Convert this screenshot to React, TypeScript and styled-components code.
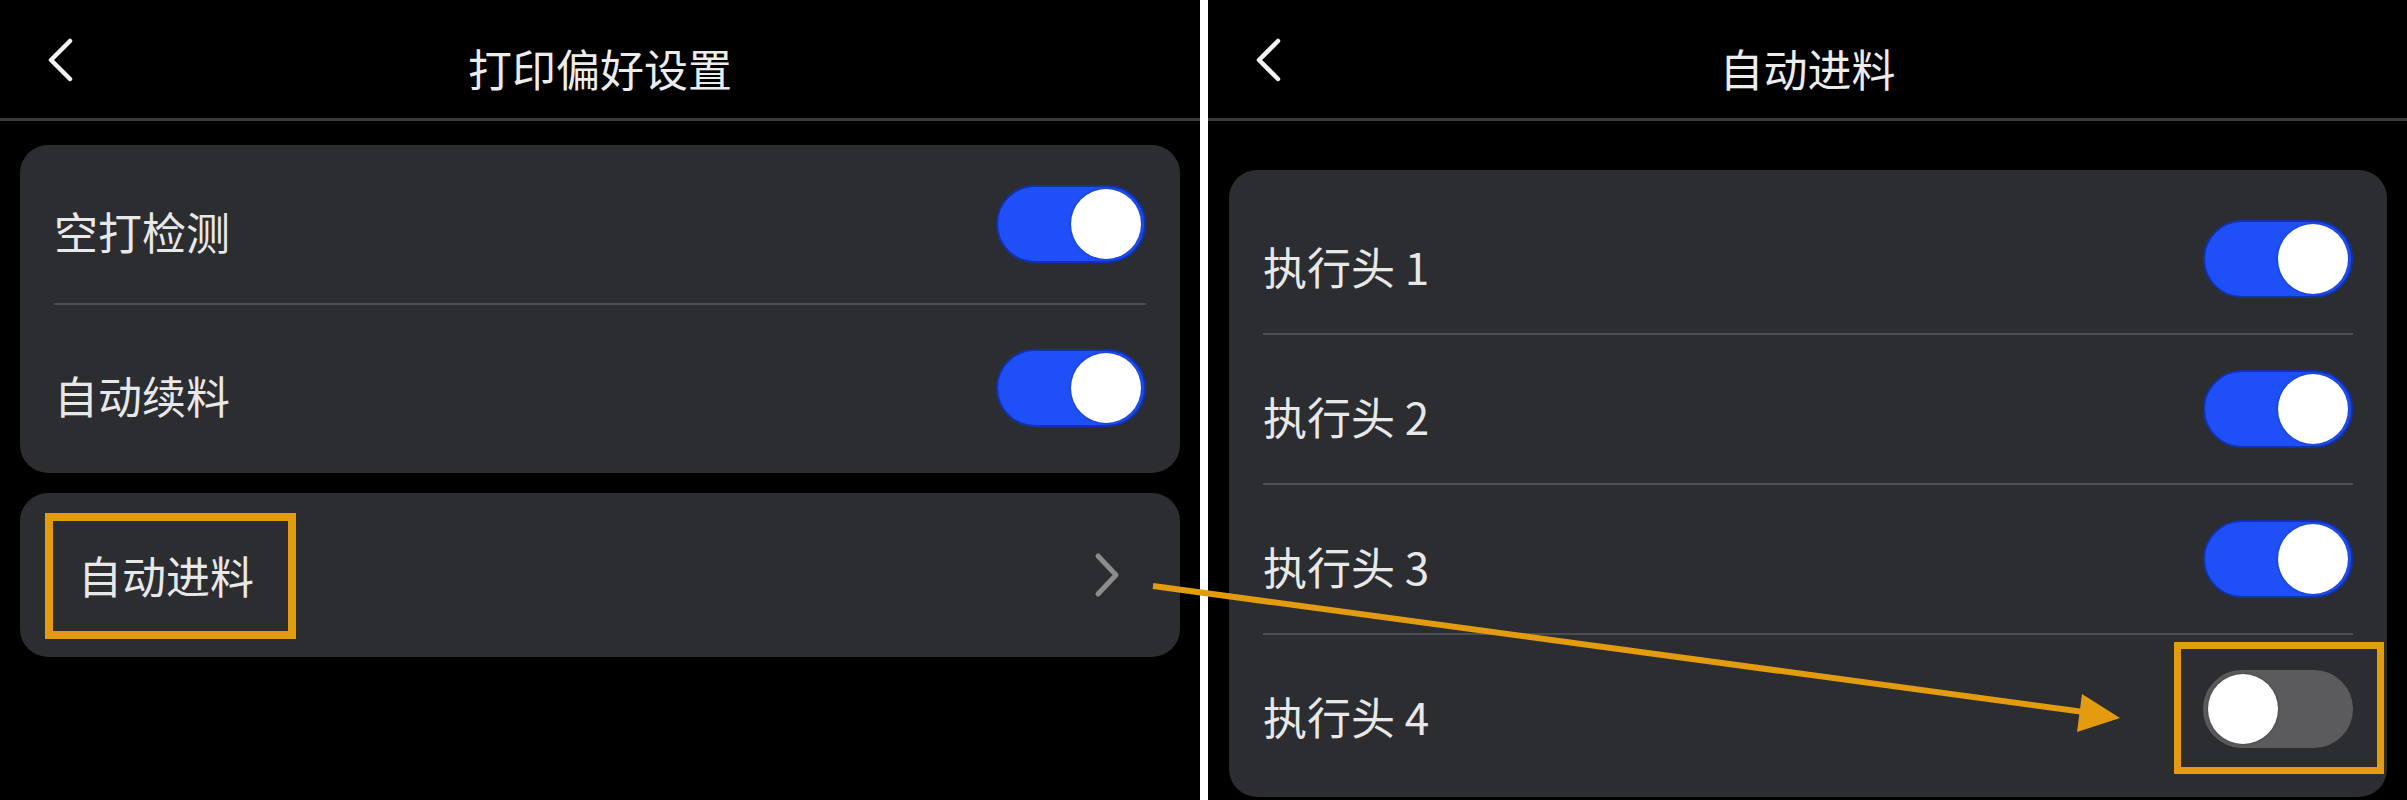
import React from "react";
import styled, { createGlobalStyle } from "styled-components";

const GlobalStyle = createGlobalStyle`
  html, body {
    margin: 0;
    padding: 0;
    background: #000;
    overflow: hidden;
  }
  body {
    font-family: "Noto Sans CJK SC", "Noto Sans", sans-serif;
  }
`;

const ACCENT = "#e39b0f";

const Page = styled.div`
  position: relative;
  width: 2407px;
  height: 800px;
  display: flex;
  background: #000;
  overflow: hidden;
`;

const Panel = styled.section<{ $width?: number }>`
  flex: ${(p) => (p.$width ? `0 0 ${p.$width}px` : "1")};
  display: flex;
  flex-direction: column;
  min-width: 0;
`;

const SplitBar = styled.div`
  flex: 0 0 8px;
  background: #fff;
`;

const Header = styled.header`
  height: 118px;
  border-bottom: 3px solid #3a3a3a;
  display: grid;
  grid-template-columns: 1fr auto 1fr;
  align-items: start;
`;

const BackButton = styled.button`
  justify-self: start;
  margin: 38px 0 0 46px;
  padding: 0;
  border: 0;
  background: none;
  width: 28px;
  height: 44px;
  display: flex;
  color: #f2f2f2;
`;

const Title = styled.h1`
  margin: 42px 0 0;
  font-size: 44px;
  line-height: 52px;
  font-weight: 400;
  color: #ececec;
  white-space: nowrap;
`;

const Content = styled.div<{ $top: number; $left: number }>`
  padding: ${(p) => p.$top}px 20px 0 ${(p) => p.$left}px;
  display: flex;
  flex-direction: column;
  gap: 20px;
`;

const Card = styled.div<{ $pad?: string }>`
  background: #2b2d31;
  border-radius: 28px;
  padding: ${(p) => p.$pad || "0"};
  display: flex;
  flex-direction: column;
`;

const Row = styled.div<{ $h: number; $inset?: number }>`
  height: ${(p) => p.$h}px;
  display: flex;
  align-items: center;
  justify-content: space-between;
  padding: 0 ${(p) => p.$inset ?? 34}px;
`;

const Label = styled.span<{ $mark?: boolean }>`
  position: relative;
  font-size: 44px;
  line-height: 52px;
  color: #e8e8e8;
  margin-top: 14px;
  white-space: nowrap;

  ${(p) =>
    p.$mark &&
    `
    margin-top: 0;
    margin-left: -2px;
    &::after {
      content: "";
      position: absolute;
      left: -33px;
      right: -42px;
      top: -36px;
      bottom: -38px;
      border: 8px solid ${ACCENT};
    }
  `}
`;

const Divider = styled.div`
  height: 2px;
  background: #4b4e53;
  margin: 0 34px;
`;

const Track = styled.div<{ $on: boolean; $mark?: boolean }>`
  position: relative;
  box-sizing: border-box;
  width: 150px;
  height: 78px;
  border-radius: 39px;
  padding: 3px;
  display: flex;
  justify-content: ${(p) => (p.$on ? "flex-end" : "flex-start")};
  align-items: center;
  background: ${(p) => (p.$on ? "#1f4ff6" : "#5b5b5d")};
  border: 2px solid ${(p) => (p.$on ? "#1232b0" : "#5b5b5d")};

  ${(p) =>
    p.$mark &&
    `
    &::after {
      content: "";
      position: absolute;
      left: -31px;
      right: -33px;
      top: -30px;
      bottom: -28px;
      border: 7px solid ${ACCENT};
    }
  `}
`;

const Knob = styled.div`
  width: 70px;
  height: 70px;
  border-radius: 50%;
  background: #fff;
  box-shadow: 0 0 3px rgba(0, 0, 0, 0.35);
`;

const Arrow = styled.svg`
  position: absolute;
  inset: 0;
  pointer-events: none;
`;

const Switch = ({ on, mark }: { on: boolean; mark?: boolean }) => (
  <Track $on={on} $mark={mark}>
    <Knob />
  </Track>
);

const Back = () => (
  <BackButton aria-label="back">
    <svg width="28" height="44" viewBox="0 0 28 44">
      <polyline
        points="24,3 5,22 24,41"
        fill="none"
        stroke="currentColor"
        strokeWidth="4.5"
        strokeLinecap="round"
        strokeLinejoin="round"
      />
    </svg>
  </BackButton>
);

const Chevron = () => (
  <svg width="26" height="46" viewBox="0 0 26 46">
    <polyline
      points="4,4 22,23 4,42"
      fill="none"
      stroke="#8c8c8c"
      strokeWidth="5"
      strokeLinecap="round"
      strokeLinejoin="round"
    />
  </svg>
);

const heads = [
  { name: "执行头 1", on: true },
  { name: "执行头 2", on: true },
  { name: "执行头 3", on: true },
  { name: "执行头 4", on: false },
];

export default function App() {
  return (
    <>
      <GlobalStyle />
      <Page>
        <Panel $width={1200}>
          <Header>
            <Back />
            <Title>打印偏好设置</Title>
          </Header>
          <Content $top={24} $left={20}>
            <Card $pad="0 0 3px">
              <Row $h={158}>
                <Label>空打检测</Label>
                <Switch on />
              </Row>
              <Divider />
              <Row $h={165}>
                <Label>自动续料</Label>
                <Switch on />
              </Row>
            </Card>
            <Card>
              <Row $h={164} $inset={60}>
                <Label $mark>自动进料</Label>
                <Chevron />
              </Row>
            </Card>
          </Content>
        </Panel>
        <SplitBar />
        <Panel>
          <Header>
            <Back />
            <Title>自动进料</Title>
          </Header>
          <Content $top={49} $left={21}>
            <Card $pad="15px 0 14px">
              {heads.map((h, i) => (
                <React.Fragment key={h.name}>
                  {i > 0 && <Divider />}
                  <Row $h={148}>
                    <Label>{h.name}</Label>
                    <Switch on={h.on} mark={i === 3} />
                  </Row>
                </React.Fragment>
              ))}
            </Card>
          </Content>
        </Panel>
        <Arrow width="2407" height="800" viewBox="0 0 2407 800">
          <line
            x1="1153"
            y1="586"
            x2="2084"
            y2="712"
            stroke={ACCENT}
            strokeWidth="6"
          />
          <polygon points="2120,718 2082,694 2077,732" fill={ACCENT} />
        </Arrow>
      </Page>
    </>
  );
}
